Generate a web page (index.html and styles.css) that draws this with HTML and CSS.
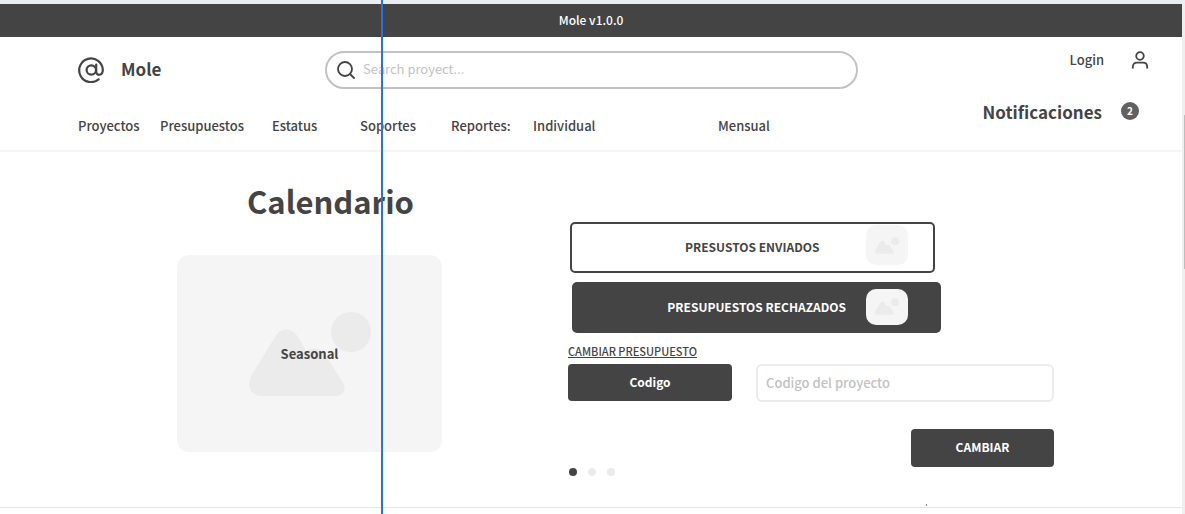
FILE: index.html
```html
<!DOCTYPE html>
<html lang="es">
<head>
<meta charset="utf-8">
<meta name="viewport" content="width=device-width, initial-scale=1">
<title>Mole</title>
<link rel="stylesheet" href="styles.css">
</head>
<body>
<svg class="defs" aria-hidden="true">
  <symbol id="picture" viewBox="0 0 122 84">
    <path d="M2 64 26 25C31 15 43 15 49 25L57 39Q68 33 76 42L94 71C98 79 94 84 86 84H14C2 84-3 75 2 64Z"/>
    <circle cx="102" cy="20" r="20"/>
  </symbol>
</svg>
<div class="page">
  <div class="version">Mole v1.0.0</div>
  <header class="header">
    <div class="primary">
      <div class="brand-row">
        <a class="brand" href="#">
          <svg class="at" viewBox="0 0 26 26" aria-hidden="true"><circle cx="13.3" cy="13" r="4.7"/><path d="M18.2 7.6v6.9c0 4.8 6.6 4.4 6.6-1.5A11.8 11.8 0 1 0 20.6 22.3"/></svg>
          <span class="brand-name">Mole</span>
        </a>
        <label class="search">
          <svg class="lens" viewBox="0 0 18 18" aria-hidden="true"><circle cx="8" cy="8" r="7"/><path d="m13 13 4 4"/></svg>
          <input class="search-input" type="search" placeholder="Search proyect..." aria-label="Search proyect">
        </label>
      </div>
      <nav class="nav">
        <a href="#">Proyectos</a>
        <a href="#">Presupuestos</a>
        <a href="#">Estatus</a>
        <a href="#">Soportes</a>
        <span>Reportes:</span>
        <a href="#">Individual</a>
        <a href="#">Mensual</a>
      </nav>
    </div>
    <div class="account">
      <a class="login" href="#">Login
        <svg class="user" viewBox="0 0 18 18" aria-hidden="true"><circle cx="9" cy="5" r="3.8"/><path d="M1.8 17.5V16Q1.8 11.7 6 11.7h6Q16.2 11.7 16.2 16v1.5"/></svg>
      </a>
      <a class="notifications" href="#">Notificaciones <span class="badge">2</span></a>
    </div>
  </header>
  <main class="main">
    <section class="calendar">
      <h1 class="title">Calendario</h1>
      <div class="card">
        <svg class="card-picture" aria-hidden="true"><use href="#picture"/></svg>
        <span class="card-label">Seasonal</span>
      </div>
    </section>
    <section class="budgets">
      <button class="wide sent" type="button"><span class="wide-label">PRESUSTOS ENVIADOS</span><span class="thumb"><svg aria-hidden="true"><use href="#picture"/></svg></span></button>
      <button class="wide rejected" type="button"><span class="wide-label">PRESUPUESTOS RECHAZADOS</span><span class="thumb"><svg aria-hidden="true"><use href="#picture"/></svg></span></button>
      <a class="change" href="#">CAMBIAR PRESUPUESTO</a>
      <div class="code-row">
        <button class="solid" type="button">Codigo</button>
        <input class="code-input" type="text" placeholder="Codigo del proyecto" aria-label="Codigo del proyecto">
      </div>
      <div class="submit-row">
        <div class="dots"><span class="dot active"></span><span class="dot"></span><span class="dot"></span></div>
        <button class="solid submit" type="button">CAMBIAR</button>
      </div>
    </section>
  </main>
  <footer class="footer"><span class="speck"></span></footer>
  <div class="guide"></div>
</div>
<div class="rail"><div class="rail-thumb"></div></div>
</body>
</html>
```
FILE: styles.css
```css
* { box-sizing: border-box; }
body {
  margin: 0;
  min-height: 100vh;
  display: grid;
  grid-template-columns: 1fr 3px;
  background: #fff;
  color: #444;
  font: 500 13px/20px "Noto Sans CJK SC", "Noto Sans", sans-serif;
  overflow: hidden;
}
a { color: inherit; text-decoration: none; }
button, input { font: inherit; color: inherit; }
button { border: 0; cursor: pointer; }
input::placeholder { color: #c2c2c2; opacity: 1; }
svg { flex: none; }
.defs { position: absolute; width: 0; height: 0; }
.page { position: relative; border-top: 4px solid #e8edf2; }
.version {
  background: #444;
  color: #fff;
  text-align: center;
  padding: 6px 0 7px;
  font-size: 12px;
}
.header {
  display: flex;
  justify-content: space-between;
  height: 115px;
  padding: 14px 33px 0 78px;
  border-bottom: 2px solid #f5f5f5;
}
.primary { flex: 0 1 780px; }
.brand-row { display: flex; justify-content: space-between; align-items: center; }
.brand { display: flex; align-items: center; gap: 17px; font-size: 17px; font-weight: 700; }
.brand-name { padding-bottom: 3px; }
.at { width: 26px; height: 26px; fill: none; stroke: #444; stroke-width: 2.2; stroke-linecap: round; }
.search {
  display: flex;
  align-items: center;
  gap: 8px;
  width: 533px;
  height: 38px;
  padding: 0 10px;
  border: 2px solid #c2c2c2;
  border-radius: 19px;
}
.lens { width: 18px; height: 18px; fill: none; stroke: #444; stroke-width: 1.8; stroke-linecap: round; }
.search-input { flex: 1; border: 0; outline: 0; padding: 0 0 2px; background: none; font-weight: 400; }
.nav {
  display: grid;
  grid-template-columns: 82fr 112fr 88fr 91fr 82fr 185fr 140fr;
  margin-top: 27px;
}
.account { display: flex; flex-direction: column; gap: 32px; margin-top: -1px; }
.login { display: flex; align-items: center; justify-content: flex-end; gap: 27px; }
.user { width: 18px; height: 18px; fill: none; stroke: #444; stroke-width: 1.8; }
.notifications { display: flex; gap: 19px; padding-right: 10px; font-size: 17px; font-weight: 700; }
.badge {
  width: 18px;
  height: 18px;
  border-radius: 50%;
  background: #606060;
  color: #fff;
  font-size: 10px;
  line-height: 17px;
  text-align: center;
}
.main {
  display: grid;
  grid-template-columns: 265fr 486fr;
  gap: 126px;
  padding: 29px 128px 0 177px;
}
.title { margin: 0 0 34px; padding-left: 42px; text-align: center; font-size: 31px; line-height: 40px; }
.card {
  display: grid;
  place-items: center;
  height: 197px;
  background: #f5f5f5;
  border-radius: 12px;
}
.card > * { grid-area: 1 / 1; }
.card-picture { width: 122px; height: 84px; fill: #ebebeb; }
.card-label { font-weight: 700; }
.budgets { display: flex; flex-direction: column; align-items: flex-start; padding-top: 41px; }
.wide {
  display: grid;
  grid-template-columns: 1fr auto 1fr;
  align-items: center;
  height: 51px;
  border-radius: 5px;
  font-size: 12px;
  font-weight: 700;
}
.wide-label { grid-column: 2; }
.sent { width: 75%; margin-left: 2px; padding: 0 25px 2px; background: #fff; border: 2px solid #444; }
.rejected { width: 76%; margin: 9px 0 0 4px; padding: 0 33px 2px; background: #444; color: #fff; }
.thumb {
  display: grid;
  place-items: center;
  justify-self: end;
  width: 42px;
  height: 36px;
  border-radius: 10px;
  background: #f5f5f5;
}
.thumb svg { width: 24px; height: 17px; fill: #ebebeb; }
.sent .thumb { height: 40px; margin-bottom: 3px; }
.change {
  margin: 9px 0 4px;
  font-size: 11px;
  line-height: 18px;
  text-decoration: underline;
}
.code-row {
  display: grid;
  grid-template-columns: 164fr 298fr;
  gap: 24px;
  width: 100%;
}
.solid {
  height: 37px;
  padding: 0 0 2px;
  border-radius: 4px;
  background: #444;
  color: #fff;
  font-size: 12px;
  font-weight: 700;
}
.code-input {
  width: 100%;
  height: 38px;
  padding: 0 8px 2px;
  border: 2px solid #ebebeb;
  border-radius: 6px;
  background: #fff;
}
.submit-row { display: flex; justify-content: space-between; width: 100%; margin-top: 27px; }
.dots { display: flex; gap: 11px; padding: 39px 0 0 1px; }
.dot { width: 8px; height: 8px; border-radius: 50%; background: #ebebeb; }
.active { background: #444; }
.submit { width: 143px; height: 38px; }
.footer {
  display: flex;
  justify-content: center;
  align-items: flex-end;
  height: 32px;
  border-bottom: 1px solid #e6e6e6;
}
.speck { width: 1px; height: 2px; margin: 0 0 1px 670px; background: #888; }
.guide { position: absolute; top: -4px; bottom: 0; left: 381px; width: 2px; background: #326de6; }
.rail { background: #efefef; padding: 115px 0 0 2px; }
.rail-thumb { height: 154px; background: #bdbdbd; }
```
